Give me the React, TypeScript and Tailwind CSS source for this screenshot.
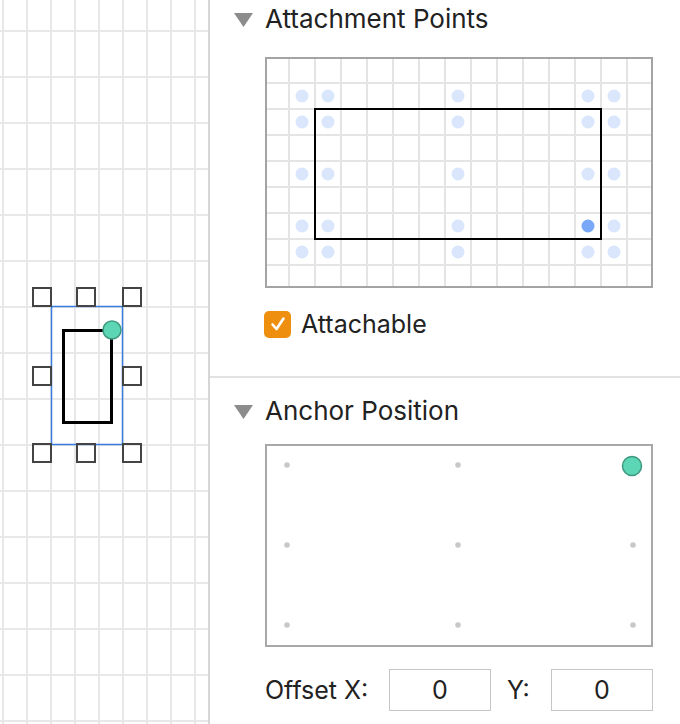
import React from 'react'

const FONT = "font-['Inter','Liberation_Sans',sans-serif]"

function Canvas() {
  const vLines = [3, 27, 51, 75, 99, 123, 147, 171, 195]
  const hLines: number[] = []
  for (let y = 31; y < 724; y += 46) hLines.push(y)
  const handles = [
    [42, 297],
    [86, 297],
    [132, 297],
    [42, 376],
    [132, 376],
    [42, 453],
    [86, 453],
    [132, 453],
  ]
  return (
    <svg width="208" height="724" className="block shrink-0">
      <rect width="208" height="724" fill="#ffffff" />
      {vLines.map((x) => (
        <line key={`v${x}`} x1={x} y1={0} x2={x} y2={724} stroke="#e8e8e8" strokeWidth={2} />
      ))}
      {hLines.map((y) => (
        <line key={`h${y}`} x1={0} y1={y} x2={208} y2={y} stroke="#e8e8e8" strokeWidth={2} />
      ))}
      <rect x={51.5} y={306.5} width={71} height={138} fill="none" stroke="#3a7be0" strokeWidth={1.5} />
      <rect x={63.5} y={330.5} width={48} height={92} fill="none" stroke="#000000" strokeWidth={3} />
      {handles.map(([cx, cy]) => (
        <rect
          key={`${cx}-${cy}`}
          x={cx - 9}
          y={cy - 9}
          width={18}
          height={18}
          fill="none"
          stroke="#444444"
          strokeWidth={2}
        />
      ))}
      <circle cx={112} cy={330} r={9} fill="#5dd6b5" stroke="#3d9a80" strokeWidth={1.5} />
    </svg>
  )
}

function Triangle() {
  return (
    <svg width="20" height="15" viewBox="0 0 20 15" className="shrink-0">
      <polygon points="0,1 19,1 9.5,15" fill="#8c8c8c" />
    </svg>
  )
}

function SectionHeader({ title }: { title: string }) {
  return (
    <div className="h-[38px] flex items-center pl-[24px] gap-[11px]">
      <Triangle />
      <span className="text-[26px] text-[#222222] leading-none">{title}</span>
    </div>
  )
}

function AttachmentGrid() {
  const vLines: number[] = []
  for (let x = 22; x <= 360; x += 26) vLines.push(x)
  const hLines: number[] = []
  for (let y = 24; y <= 206; y += 26) hLines.push(y)
  const cols = [35, 61, 191, 321, 347]
  const rows = [37, 63, 115, 167, 193]
  return (
    <div className="ml-[55px] w-[388px] h-[231px] border-2 border-[#a4a4a4] bg-white">
      <svg width="384" height="227" className="block">
        {vLines.map((x) => (
          <line key={`v${x}`} x1={x} y1={0} x2={x} y2={227} stroke="#e4e4e4" strokeWidth={2} />
        ))}
        {hLines.map((y) => (
          <line key={`h${y}`} x1={0} y1={y} x2={384} y2={y} stroke="#e4e4e4" strokeWidth={2} />
        ))}
        {rows.map((cy) =>
          cols.map((cx) => (
            <circle
              key={`${cx}-${cy}`}
              cx={cx}
              cy={cy}
              r={6.5}
              fill={cx === 321 && cy === 167 ? '#7aa8f8' : '#dae6fc'}
            />
          )),
        )}
        <rect x={48} y={50} width={286} height={130} fill="none" stroke="#000000" strokeWidth={2} />
      </svg>
    </div>
  )
}

function AnchorBox() {
  const xs = [20, 191, 366]
  const ys = [19, 99, 179]
  return (
    <div className="ml-[55px] w-[388px] h-[203px] border-2 border-[#a8a8a8] bg-white">
      <svg width="384" height="199" className="block">
        {ys.map((cy) =>
          xs.map((cx) =>
            cx === 366 && cy === 19 ? null : (
              <circle key={`${cx}-${cy}`} cx={cx} cy={cy} r={2.8} fill="#c8c8c8" />
            ),
          ),
        )}
        <circle cx={365} cy={20} r={9.5} fill="#5dd6b5" stroke="#3d9a80" strokeWidth={1.5} />
      </svg>
    </div>
  )
}

function NumberField({ value }: { value: string }) {
  return (
    <div className="w-[102px] h-[42px] border border-[#c6c6c6] bg-white flex items-center justify-center text-[25px] text-[#222222] leading-none">
      {value}
    </div>
  )
}

export default function App() {
  return (
    <div className={`w-[680px] h-[724px] flex bg-white overflow-hidden ${FONT}`}>
      <Canvas />
      <div className="w-[2px] shrink-0 bg-[#d6d6d6]" />
      <div className="flex-1 flex flex-col">
        <SectionHeader title="Attachment Points" />
        <div className="mt-[19px]">
          <AttachmentGrid />
        </div>
        <div className="mt-[22px] ml-[54px] h-[28px] flex items-center gap-[10px]">
          <div className="w-[27px] h-[27px] rounded-[5px] bg-[#ef8f10] flex items-center justify-center">
            <svg width="18" height="18" viewBox="0 0 18 18">
              <path
                d="M3.5 9.5 L7.5 14 L14.5 3.5"
                fill="none"
                stroke="#ffffff"
                strokeWidth={2.6}
                strokeLinecap="round"
                strokeLinejoin="round"
              />
            </svg>
          </div>
          <span className="text-[25px] text-[#222222] leading-none">Attachable</span>
        </div>
        <div className="mt-[38px] h-[2px] bg-[#e2e2e2]" />
        <div className="mt-[14px]">
          <SectionHeader title="Anchor Position" />
        </div>
        <div className="mt-[14px]">
          <AnchorBox />
        </div>
        <div className="mt-[22px] ml-[55px] flex items-center text-[25px] text-[#222222] leading-none">
          <span className="w-[124px]">Offset X:</span>
          <NumberField value="0" />
          <span className="ml-[16px] w-[44px]">Y:</span>
          <NumberField value="0" />
        </div>
      </div>
    </div>
  )
}
